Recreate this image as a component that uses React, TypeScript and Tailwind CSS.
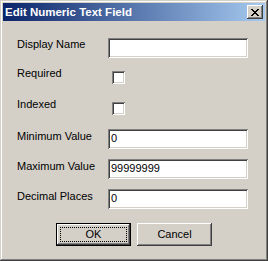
import React from "react";

const font = { fontFamily: '"Liberation Sans", Arial, sans-serif' };

function Label({ children, mt = "mt-0" }: { children: React.ReactNode; mt?: string }) {
  return (
    <div className={`w-[91px] shrink-0 text-[11px] leading-[13px] text-black ${mt}`}>{children}</div>
  );
}

function TextInput({ value }: { value: string }) {
  return (
    <div className="w-[140px] h-[20px] bg-white shadow-[inset_1px_1px_#808080,inset_-1px_-1px_#ffffff,inset_2px_2px_#404040,inset_-2px_-2px_#d4d0c8] pl-[3px] pt-[3px] text-[11px] leading-[13px] text-black">
      {value}
    </div>
  );
}

function Check() {
  return (
    <div className="ml-[4px] mt-[4px] w-[13px] h-[13px] bg-white shadow-[inset_1px_1px_#808080,inset_-1px_-1px_#ffffff,inset_2px_2px_#404040,inset_-2px_-2px_#d4d0c8]" />
  );
}

export default function App() {
  return (
    <div
      style={font}
      className="w-[268px] h-[261px] bg-[#d4d0c8] p-[3px] flex flex-col shadow-[inset_-1px_-1px_#404040,inset_1px_1px_#d4d0c8,inset_-2px_-2px_#808080,inset_2px_2px_#ffffff] overflow-hidden"
    >
      <div className="h-[18px] flex items-center justify-between bg-[linear-gradient(to_right,#0a246a,#a6caf0)] pl-[2px] pr-[2px]">
        <span className="text-white font-bold text-[11.5px] leading-[13px] whitespace-nowrap">
          Edit Numeric Text Field
        </span>
        <div className="w-[16px] h-[14px] bg-[#d4d0c8] flex items-center justify-center shadow-[inset_-1px_-1px_#404040,inset_1px_1px_#ffffff,inset_-2px_-2px_#808080,inset_2px_2px_#d4d0c8]">
          <svg width="8" height="7" viewBox="0 0 8 7" shapeRendering="crispEdges">
            <path
              fill="#000"
              d="M0 0h2v1h1v1h2V1h1V0h2v1H7v1H6v1H5v1h1v1h1v1h1v1H6V6H5V5H3v1H2v1H0V6h1V5h1V4h1V3H2V2H1V1H0z"
            />
          </svg>
        </div>
      </div>

      <div className="flex flex-col pl-[14px]">
        <div className="flex items-start mt-[17px]">
          <Label>Display Name</Label>
          <TextInput value="" />
        </div>
        <div className="flex items-start mt-[9px]">
          <Label>Required</Label>
          <Check />
        </div>
        <div className="flex items-start mt-[14px]">
          <Label>Indexed</Label>
          <Check />
        </div>
        <div className="flex items-start mt-[14px]">
          <Label mt="mt-[1px]">Minimum Value</Label>
          <TextInput value="0" />
        </div>
        <div className="flex items-start mt-[10px]">
          <Label mt="mt-[1px]">Maximum Value</Label>
          <TextInput value="99999999" />
        </div>
        <div className="flex items-start mt-[10px]">
          <Label mt="mt-[1px]">Decimal Places</Label>
          <TextInput value="0" />
        </div>
      </div>

      <div className="flex justify-center gap-[6px] mt-[14px]">
        <div className="w-[75px] h-[23px] border border-black bg-[#d4d0c8] shadow-[inset_-1px_-1px_#404040,inset_1px_1px_#ffffff,inset_-2px_-2px_#808080,inset_2px_2px_#d4d0c8] p-[3px]">
          <div className="w-full h-full border border-dotted border-black flex items-center justify-center text-[11px] leading-[13px] text-black">
            OK
          </div>
        </div>
        <div className="w-[75px] h-[23px] bg-[#d4d0c8] shadow-[inset_-1px_-1px_#404040,inset_1px_1px_#ffffff,inset_-2px_-2px_#808080,inset_2px_2px_#d4d0c8] flex items-center justify-center text-[11px] leading-[13px] text-black">
          Cancel
        </div>
      </div>
    </div>
  );
}
